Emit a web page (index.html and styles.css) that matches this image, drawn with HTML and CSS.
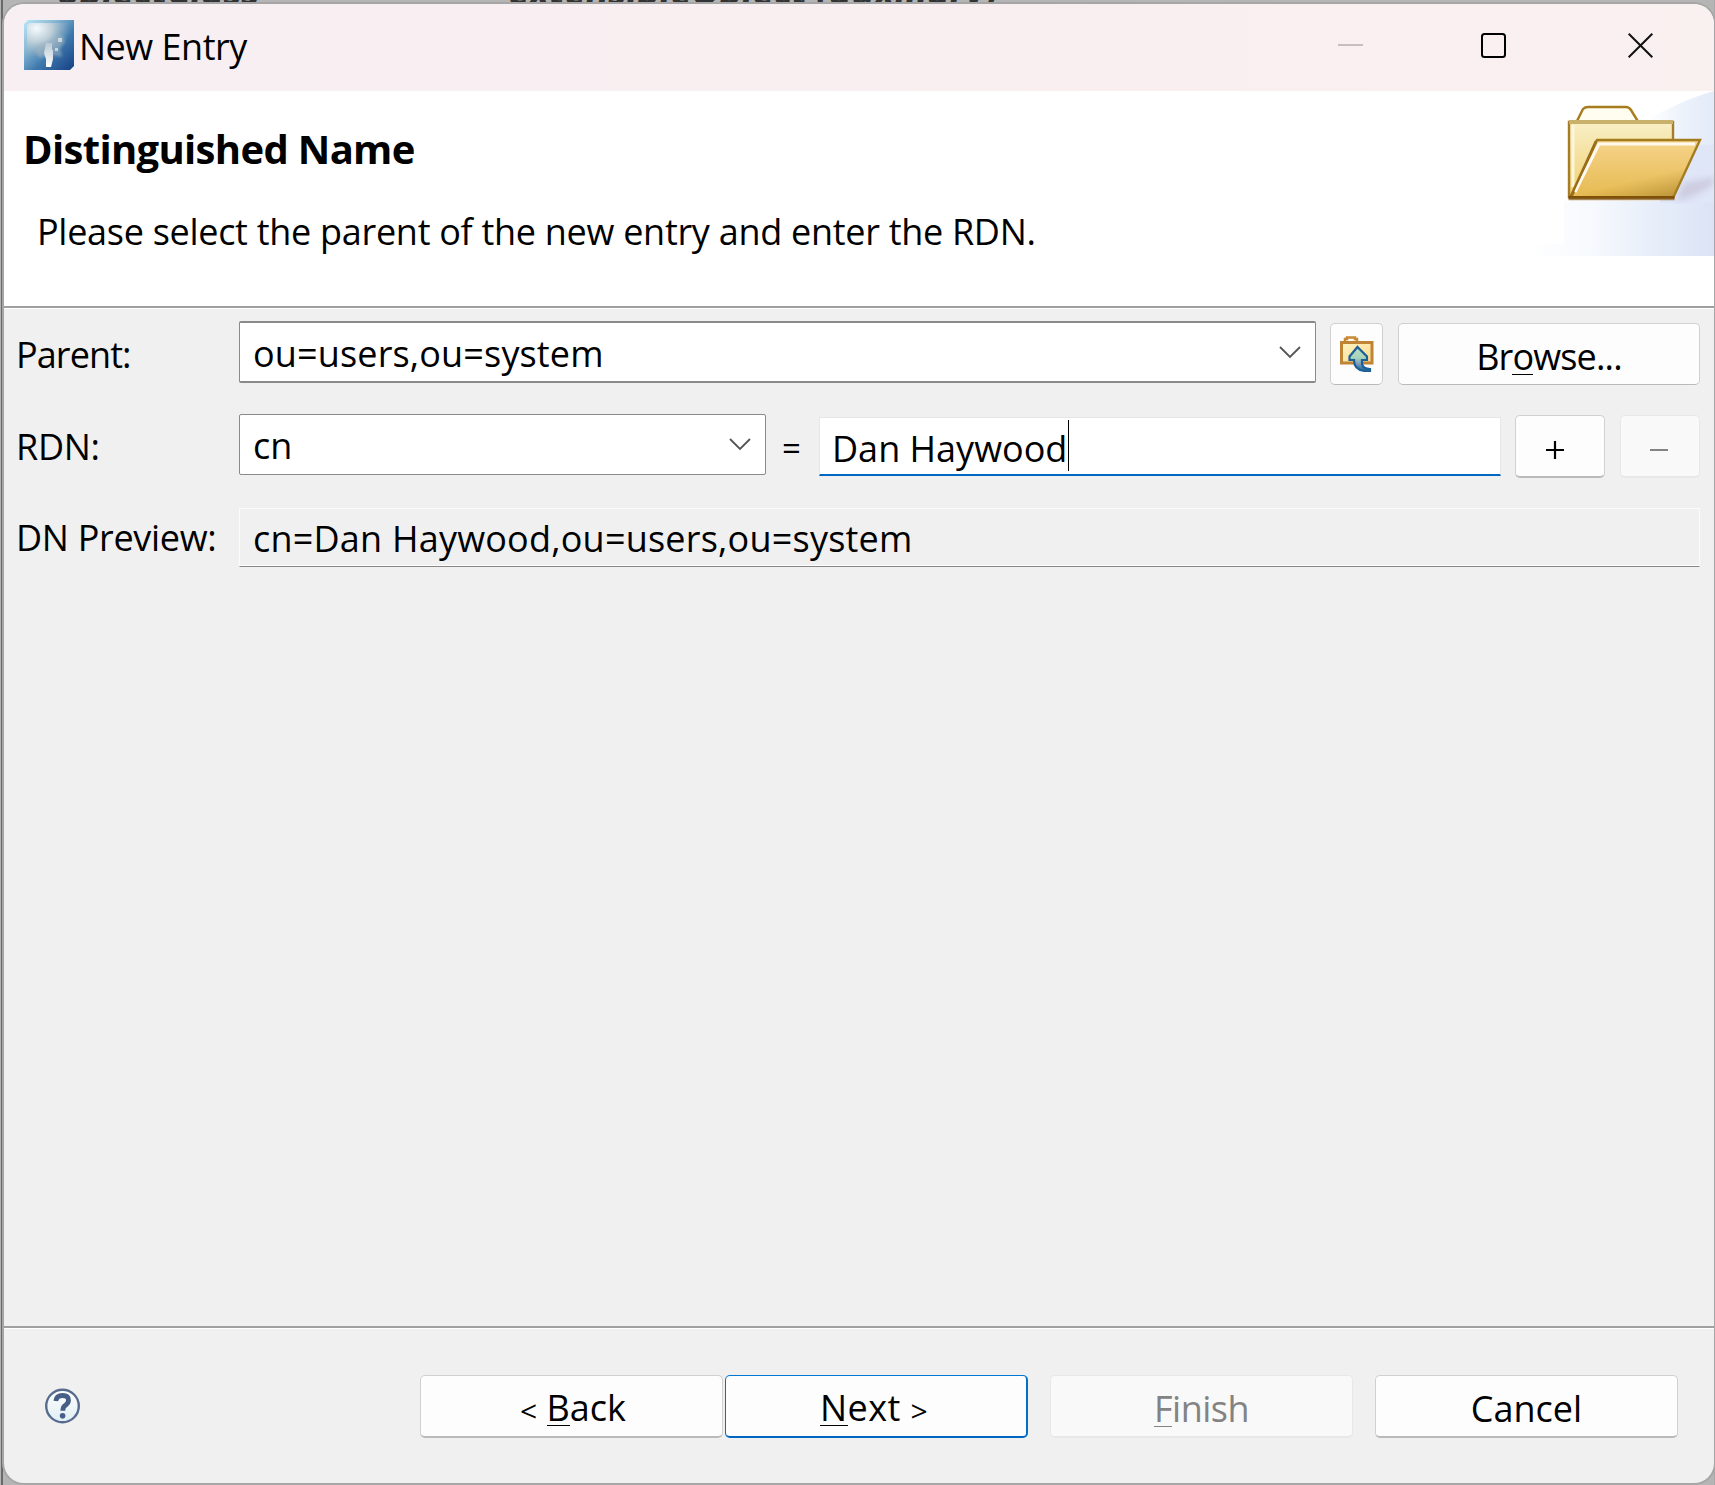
FILE: index.html
```
<!DOCTYPE html>
<html lang="en">
<head>
<meta charset="utf-8">
<title>New Entry</title>
<link rel="stylesheet" href="styles.css">
</head>
<body>
<div class="backdrop"><span class="behind behind-attr">objectClass</span><span class="behind behind-value">extensibleObject (auxiliary)</span></div>
<main class="window">
  <header class="titlebar">
    <svg class="app-icon" viewBox="0 0 50 50">
      <defs>
        <linearGradient id="app" x1="0" y1="0" x2="1" y2="1"><stop offset="0" stop-color="#b9e6f8"/><stop offset=".3" stop-color="#8dbbd6"/><stop offset=".6" stop-color="#3f7aae"/><stop offset="1" stop-color="#163f86"/></linearGradient>
        <radialGradient id="glow" cx=".22" cy=".15" r=".8"><stop offset="0" stop-color="#f4fbff"/><stop offset=".45" stop-color="#c6d3da" stop-opacity=".9"/><stop offset="1" stop-color="#8fa9b8" stop-opacity="0"/></radialGradient>
        <linearGradient id="trunk" x1="0" y1="0" x2="0" y2="1"><stop offset="0" stop-color="#b8c8d2"/><stop offset="1" stop-color="#fff"/></linearGradient>
        <filter id="haze"><feGaussianBlur stdDeviation="1.500"/></filter>
      </defs>
      <path d="M4 0H50V46L46 50H0V4Z" fill="url(#app)"/>
      <path d="M5 3H46V40L34 36H3V5Z" fill="url(#glow)"/>
      <path d="M11 30L18 22L24 27L30 18L38 15L41 22L36 28L38 37L28 35L15 38Z" fill="#a3b6c0" opacity=".55" filter="url(#haze)"/>
      <path d="M22 23H28V30H29V39L27 47H22V39L20 33Z" fill="url(#trunk)"/>
      <path d="M34 18h4v4h-4zM31 28h3v3h-3z" fill="#e4ecef" opacity=".7"/>
    </svg>
    <h1 class="window-title">New Entry</h1>
    <div class="window-controls">
      <svg viewBox="0 0 26 26"><path d="M0 12H25" stroke="#c5bfc1" stroke-width="2"/></svg>
      <svg viewBox="0 0 26 26"><rect x="1" y="1" width="23" height="23" rx="2.5" fill="none" stroke="#000" stroke-width="2"/></svg>
      <svg viewBox="0 0 26 26"><path d="M.7 .7L24.3 24.3M24.3 .7L.7 24.3" stroke="#111" stroke-width="2"/></svg>
    </div>
  </header>
  <section class="banner">
    <div class="banner-text">
      <h2 class="heading">Distinguished Name</h2>
      <p class="message">Please select the parent of the new entry and enter the RDN.</p>
    </div>
    <svg class="banner-art" viewBox="0 0 184 165">
      <defs>
        <linearGradient id="sky"><stop offset="0" stop-color="#fff"/><stop offset=".35" stop-color="#f6f9fd"/><stop offset=".7" stop-color="#e6edf9"/><stop offset="1" stop-color="#dce3f6"/></linearGradient>
        <linearGradient id="skyTop"><stop offset="0" stop-color="#fff"/><stop offset=".5" stop-color="#edf3fb"/><stop offset="1" stop-color="#e3ebf9"/></linearGradient>
        <linearGradient id="back" x1="0" y1="0" x2="0" y2="1"><stop offset="0" stop-color="#f8efc6"/><stop offset="1" stop-color="#f1d070"/></linearGradient>
        <linearGradient id="front" x1="0" y1="0" x2="0" y2="1"><stop offset="0" stop-color="#f6d38b"/><stop offset="1" stop-color="#e5ba50"/></linearGradient>
        <linearGradient id="corner" x1=".75" y1=".55" x2="1" y2="1"><stop offset="0" stop-color="#b08a30" stop-opacity="0"/><stop offset="1" stop-color="#97742a"/></linearGradient>
        <filter id="soft"><feGaussianBlur stdDeviation="3"/></filter>
      </defs>
      <path d="M0 165V153H34V110H184V165Z" fill="url(#sky)"/>
      <path d="M118 28Q155 8 184 0V54H118Z" fill="url(#skyTop)"/>
      <path d="M130 54H184V112H130Z" fill="#dfe6f7"/>
      <path d="M146 110L153 92L184 86V92Q172 104 146 110Z" fill="#c9c6dc" filter="url(#soft)" opacity=".8"/>
      <path d="M46 32L53 18Q55 16 58 16H96Q99 16 101 19L109 32Z" fill="#fffdf0" stroke="#a67c1c" stroke-width="2.4"/>
      <path d="M39 31H143V106H39Z" fill="url(#back)" stroke="#a57d28" stroke-width="2.4"/>
      <path d="M39 31H143" stroke="#c9b16c" stroke-width="4"/>
      <path d="M43 34V96" stroke="#fdf6d8" stroke-width="3"/>
      <path d="M67 49H170L143 107H41Z" fill="url(#front)" stroke="#a47c20" stroke-width="2.4"/>
      <path d="M67 49H170L143 107H41Z" fill="url(#corner)" opacity=".75"/>
      <path d="M45 101L69 53H165" fill="none" stroke="#fffaf0" stroke-width="3"/>
      <path d="M40 107L66 50" stroke="#9a6d18" stroke-width="2.500"/>
      <path d="M38.500 106.500H144.500" stroke="#7f5007" stroke-width="3"/>
      <path d="M38.500 108.500H144.500" stroke="#a9895c" stroke-width="1.500"/>
    </svg>
  </section>
  <section class="form">
    <div class="row row-parent">
      <label class="label l-parent">Parent:</label>
      <div class="combo combo-parent"><span>ou=users,ou=system</span>
        <svg class="chevron" viewBox="0 0 22 13"><path d="M1 1L11 11L21 1" fill="none" stroke="#555" stroke-width="1.800"/></svg></div>
      <button class="btn btn-up" aria-label="Parent">
        <svg class="up-icon" viewBox="0 0 34 36">
          <defs><linearGradient id="fold" x1="0" y1="0" x2="1" y2="1"><stop offset="0" stop-color="#fff3c4"/><stop offset="1" stop-color="#fbd98c"/></linearGradient>
          <linearGradient id="arrow" x1="0" y1="0" x2="0" y2="1"><stop offset="0" stop-color="#b9dfc6"/><stop offset=".45" stop-color="#a5d4b9"/><stop offset=".7" stop-color="#7d9cc0"/><stop offset="1" stop-color="#1c6097"/></linearGradient></defs>
          <path d="M5 5V3H7V1.500H15V3H17V6" fill="#fffaf0" stroke="#c68a35" stroke-width="2.500"/>
          <path d="M1.500 6.500H32V27H1.500Z" fill="url(#fold)" stroke="#c08435" stroke-width="3"/>
          <path d="M17.500 11L27 20.500V24H22V28Q23 33 30 33V35H25Q14 34 14 24H9.500V20.500Z" fill="url(#arrow)" stroke="#1c6097" stroke-width="2.200"/>
        </svg>
      </button>
      <button class="btn btn-browse"><span>Br<u>o</u>wse...</span></button>
    </div>
    <div class="row row-rdn">
      <label class="label l-rdn">RDN:</label>
      <div class="combo combo-rdn"><span>cn</span>
        <svg class="chevron" viewBox="0 0 22 13"><path d="M1 1L11 11L21 1" fill="none" stroke="#555" stroke-width="1.800"/></svg></div>
      <span class="equals">=</span>
      <div class="field"><span>Dan Haywood</span><i class="caret"></i></div>
      <button class="btn btn-add" aria-label="Add"><svg viewBox="0 0 20 20"><path d="M1 10H19M10 1V19" stroke="#000" stroke-width="2.200"/></svg></button>
      <button class="btn btn-remove disabled" aria-label="Remove"><svg viewBox="0 0 20 20"><path d="M1 10H19" stroke="#838383" stroke-width="2"/></svg></button>
    </div>
    <div class="row row-preview">
      <label class="label l-preview">DN Preview:</label>
      <div class="preview">cn=Dan Haywood,ou=users,ou=system</div>
    </div>
  </section>
  <footer class="footer">
    <svg class="help" viewBox="0 0 36 36">
      <defs><linearGradient id="disc" x1="0" y1="0" x2="0" y2="1"><stop offset="0" stop-color="#fff"/><stop offset="1" stop-color="#dfeef4"/></linearGradient></defs>
      <circle cx="17.500" cy="18" r="16.300" fill="url(#disc)" stroke="#566b8d" stroke-width="2.400"/>
      <path d="M10.800 13Q11.500 7.500 17.500 7.500Q23.500 7.500 23.500 12.300Q23.500 15 20.500 17.300Q17.800 19 17.800 22.800" fill="none" stroke="#475f87" stroke-width="4.800"/>
      <circle cx="17.600" cy="27.700" r="2.800" fill="#475f87"/>
    </svg>
    <button class="btn nav back"><span><b class="angle">&lt;</b> <u>B</u>ack</span></button>
    <button class="btn nav next"><span><u>N</u>ext <b class="angle">&gt;</b></span></button>
    <button class="btn nav finish disabled"><span><u>F</u>inish</span></button>
    <button class="btn nav cancel"><span>Cancel</span></button>
  </footer>
</main>
</body>
</html>
```
FILE: styles.css
```
* { box-sizing: border-box; }
body {
  margin: 0;
  width: 1715px;
  height: 1485px;
  overflow: hidden;
  position: relative;
  display: flex;
  padding: 4px 1px 2px 4px;
  background: linear-gradient(90deg, #b5b5b5 0 1px, #696969 1px 3px, #b5b5b5 3px 1714px, #a8a8a8 1714px);
  font-family: "Open Sans", "Noto Sans", sans-serif;
  font-size: 36px;
  color: #000;
}
.backdrop { position: absolute; inset: 0 0 auto 0; height: 30px; overflow: hidden; }
.behind { position: absolute; top: -33px; line-height: 46px; font-size: 39px; font-weight: 700; font-style: italic; color: #333; white-space: nowrap; }
.behind-attr { left: 57px; letter-spacing: -0.7px; }
.behind-value { left: 508px; letter-spacing: -0.7px; }
.window {
  position: relative;
  flex: 1;
  display: flex;
  flex-direction: column;
  overflow: hidden;
  border-radius: 20px;
  background: #f0f0f0;
  box-shadow: 0 0 0 2px #a6a6a6;
}
h1, h2, p { margin: 0; font-weight: 400; white-space: nowrap; }
span, label { white-space: nowrap; }
u { text-decoration: none; border-bottom: 1px solid currentColor; display: inline-block; line-height: 35px; }
.titlebar {
  height: 87px;
  display: flex;
  align-items: flex-start;
  padding: 16px 61px 0 20px;
  background: linear-gradient(90deg, #f8eff3, #f9eff1 60%, #f9f0f0);
}
.app-icon { width: 50px; height: 50px; }
.window-title { font-size: 36px; line-height: 54px; margin-left: 5px; flex: 1; letter-spacing: -0.5px; }
.window-controls { display: flex; gap: 0; padding-top: 13px; }
.window-controls svg { width: 26px; height: 26px; margin-left: 120px; }
.window-controls svg + svg { margin-left: 117px; }
.window-controls svg + svg + svg { margin-left: 121px; margin-right: -1px; }
.banner {
  height: 218px;
  display: flex;
  justify-content: space-between;
  background: #fff;
  border-bottom: 1px solid #fff;
  box-shadow: inset 0 -2px #a0a0a0;
}
.banner-text { display: flex; flex-direction: column; }
.heading { font-weight: 700; font-size: 40px; line-height: 60px; margin: 28px 0 0 19px; letter-spacing: -0.67px; }
.message { line-height: 50px; margin: 28px 0 0 33px; letter-spacing: -0.29px; }
.banner-art { width: 184px; height: 165px; }
.form { flex: 1; padding: 12px 14px 0 12px; }
.row { display: flex; align-items: flex-start; }
.row-parent { height: 93px; }
.row-rdn { height: 94px; }
.label { width: 223px; flex: none; }
.l-parent { line-height: 68px; letter-spacing: -0.9px; }
.l-rdn { line-height: 66px; letter-spacing: -0.3px; }
.l-preview { line-height: 59px; letter-spacing: -0.3px; }
.combo {
  height: 62px;
  border: 1px solid #8a8a8a;
  border-width: 2px 1px;
  border-radius: 2px;
  background: #fff;
  display: flex;
  justify-content: space-between;
  padding: 0 14px 0 13px;
  line-height: 61px;
}
.combo-parent { width: 1077px; margin-right: 14px; letter-spacing: 0.15px; }
.combo-rdn { width: 527px; height: 61px; border-width: 1px; margin-right: 16px; line-height: 62px; }
.chevron { width: 22px; height: 13px; margin-top: 23px; }
.btn {
  display: flex;
  align-items: center;
  justify-content: center;
  height: 62px;
  padding: 0;
  font: inherit;
  line-height: 62px;
  color: #000;
  background: #fdfdfd;
  border: 1px solid #d0d0d0;
  border-bottom-color: #bababa;
  border-radius: 5px;
}
.btn-up { width: 53px; margin: 2px 15px 0 0; }
.up-icon { width: 34px; height: 36px; }
.btn-browse { width: 302px; margin-top: 2px; padding-top: 5px; letter-spacing: -0.85px; }
.disabled { color: #838383; background: #f9f9f9; border-color: #e8e8e8; }
.equals { width: 37px; line-height: 68px; font-size: 33px; }
.field {
  width: 682px;
  height: 59px;
  margin: 3px 14px 0 0;
  padding-left: 12px;
  display: flex;
  background: #fff;
  border: 1px solid #e6e6e6;
  border-bottom: 2px solid #0067c0;
  line-height: 61px;
}
.caret { width: 1px; height: 51px; margin: 2px 0 0 1px; background: #000; }
.btn-add, .btn-remove { height: 63px; margin-top: 1px; border-bottom-width: 2px; }
.btn-add { width: 90px; margin-right: 15px; }
.btn-remove { width: 80px; }
.btn-add svg, .btn-remove svg { width: 20px; height: 20px; margin-top: 7px; }
.btn-add svg { margin-right: 11px; }
.btn-remove svg { margin-right: 3px; }
.preview {
  flex: 1;
  height: 59px;
  padding-left: 13px;
  border: 1px solid #fbfbfb;
  border-bottom-color: #868686;
  box-shadow: inset 0 -1px #fff;
  line-height: 60px;
  letter-spacing: 0.21px;
}
.footer {
  height: 157px;
  display: flex;
  align-items: flex-start;
  padding: 46px 0 0 41px;
  border-top: 2px solid #a0a0a0;
  box-shadow: inset 0 1px #fff;
}
.help { width: 36px; height: 36px; margin-top: 14px; }
.nav { width: 303px; height: 63px; border-bottom-width: 2px; margin-top: 1px; padding-top: 6px; }
.angle { font-weight: 400; font-size: 30px; position: relative; top: 1px; }
.back { margin-left: 339px; padding-left: 3px; }
.next { margin-left: 2px; border: 2px solid #0078d4; border-color: #0078d4 #0070c8 #0067c0; border-width: 1px 2px 2px 1px; padding-right: 4px; letter-spacing: 0.4px; }
.finish { margin-left: 22px; letter-spacing: -0.5px; }
.cancel { margin-left: 22px; }
```
